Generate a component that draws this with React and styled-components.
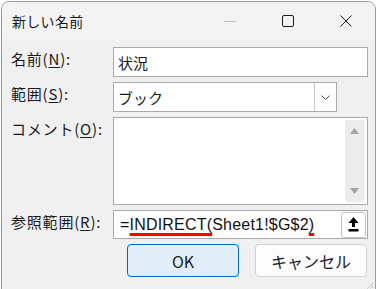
import React from 'react';
import styled, { createGlobalStyle } from 'styled-components';

const GlobalStyle = createGlobalStyle`
  html, body {
    margin: 0;
    padding: 0;
    background: #ffffff;
  }
  body {
    font-family: "Noto Sans CJK JP", "Noto Sans", sans-serif;
    color: #1a1a1a;
  }
`;

const Window = styled.div`
  position: relative;
  margin: 1px 0 0 1px;
  width: 375px;
  height: 300px;
  box-sizing: border-box;
  background: #f0f0f0;
  border: 1px solid #9c9c9c;
  border-radius: 8px 8px 0 0;
  overflow: hidden;
`;

const TitleBar = styled.div`
  display: flex;
  align-items: center;
  height: 38px;
  background: #f3f3f3;
`;

const Title = styled.div`
  flex: 1;
  padding-left: 10px;
  font-size: 14px;
  letter-spacing: 0.3px;
`;

const Controls = styled.div`
  display: flex;
  height: 100%;
`;

const ControlButton = styled.div`
  width: 58px;
  height: 100%;
  display: flex;
  align-items: center;
  justify-content: center;
`;

const Body = styled.div`
  display: grid;
  grid-template-columns: 102px 1fr;
  row-gap: 5px;
  padding: 7px 7px 0 9px;
`;

const Label = styled.div`
  font-size: 15px;
  line-height: 24px;
  letter-spacing: 0.8px;
  white-space: nowrap;
  u {
    text-underline-offset: 2px;
  }
`;

const Field = styled.div`
  box-sizing: border-box;
  height: ${(p) => p.$h || 30}px;
  width: ${(p) => (p.$w ? `${p.$w}px` : 'auto')};
  background: #ffffff;
  border: 1px solid #a9a9a9;
  display: flex;
  align-items: ${(p) => (p.$top ? 'stretch' : 'center')};
  font-size: 15px;
  padding-left: 4px;
`;

const FieldText = styled.span`
  flex: 1;
`;

const DropButton = styled.div`
  box-sizing: border-box;
  width: 22px;
  height: 28px;
  border-left: 1px solid #c9c9c9;
  display: flex;
  align-items: center;
  justify-content: center;
`;

const Scrollbar = styled.div`
  margin: 2px 3px 2px auto;
  width: 19px;
  background: #ececec;
  display: flex;
  flex-direction: column;
  align-items: center;
  justify-content: space-between;
  padding: 8px 0;
  box-sizing: border-box;
`;

const Formula = styled.span`
  flex: 1;
  padding-left: 2px;
  font-family: "Liberation Sans", Arial, sans-serif;
  font-size: 16px;
  letter-spacing: 0.2px;
  color: #111;
`;

const Squiggle = styled.span`
  text-decoration-line: underline;
  text-decoration-color: #ff0000;
  text-decoration-thickness: 3px;
  text-underline-offset: 3px;
  text-decoration-skip-ink: none;
`;

const PickButton = styled.div`
  box-sizing: border-box;
  width: 25px;
  height: 26px;
  margin-right: 1px;
  border: 1px solid #c4c4c4;
  border-radius: 3px;
  background: #ffffff;
  display: flex;
  align-items: center;
  justify-content: center;
`;

const ButtonRow = styled.div`
  grid-column: 1 / -1;
  display: flex;
  justify-content: flex-end;
  gap: 16px;
  padding-right: 1px;
`;

const Button = styled.div`
  box-sizing: border-box;
  width: 112px;
  height: 33px;
  border-radius: 4px;
  display: flex;
  align-items: center;
  justify-content: center;
  font-size: 16px;
  background: ${(p) => (p.$primary ? '#e0eef9' : '#fdfdfd')};
  border: 1px solid ${(p) => (p.$primary ? '#0067c0' : '#d0d0d0')};
`;

const Grip = styled.svg`
  position: absolute;
  right: 1px;
  bottom: 10px;
`;

export default function App() {
  return (
    <>
      <GlobalStyle />
      <Window>
        <TitleBar>
          <Title>新しい名前</Title>
          <Controls>
            <ControlButton>
              <svg width="12" height="12" viewBox="0 0 12 12">
                <line x1="0" y1="6.5" x2="12" y2="6.5" stroke="#bdbdbd" strokeWidth="1" />
              </svg>
            </ControlButton>
            <ControlButton>
              <svg width="12" height="12" viewBox="0 0 12 12">
                <rect x="0.5" y="0.5" width="11" height="11" rx="1.5" fill="none" stroke="#1a1a1a" strokeWidth="1" />
              </svg>
            </ControlButton>
            <ControlButton>
              <svg width="12" height="12" viewBox="0 0 12 12">
                <path d="M0.5 0.5 L11.5 11.5 M11.5 0.5 L0.5 11.5" stroke="#1a1a1a" strokeWidth="1" />
              </svg>
            </ControlButton>
          </Controls>
        </TitleBar>
        <Body>
          <Label>名前(<u>N</u>):</Label>
          <Field>
            <FieldText>状況</FieldText>
          </Field>

          <Label>範囲(<u>S</u>):</Label>
          <Field $w={224}>
            <FieldText>ブック</FieldText>
            <DropButton>
              <svg width="9" height="5" viewBox="0 0 9 5">
                <path d="M0.5 0.5 L4.5 4.5 L8.5 0.5" fill="none" stroke="#444" strokeWidth="1" />
              </svg>
            </DropButton>
          </Field>

          <Label>コメント(<u>O</u>):</Label>
          <Field $h={88} $top>
            <Scrollbar>
              <svg width="9" height="6" viewBox="0 0 9 6">
                <path d="M4.5 0 L9 6 L0 6 Z" fill="#a3a3a3" />
              </svg>
              <svg width="9" height="6" viewBox="0 0 9 6">
                <path d="M0 0 L9 0 L4.5 6 Z" fill="#a3a3a3" />
              </svg>
            </Scrollbar>
          </Field>

          <Label>参照範囲(<u>R</u>):</Label>
          <Field $h={29}>
            <Formula>
              =<Squiggle>INDIRECT(</Squiggle>Sheet1!$G$2<Squiggle>)</Squiggle>
            </Formula>
            <PickButton>
              <svg width="11" height="15" viewBox="0 0 11 15">
                <path d="M5.5 0 L10.5 6 L7 6 L7 10 L4 10 L4 6 L0.5 6 Z" fill="#000" />
                <rect x="0.5" y="12" width="10" height="2.5" fill="#000" />
              </svg>
            </PickButton>
          </Field>

          <ButtonRow>
            <Button $primary>OK</Button>
            <Button>キャンセル</Button>
          </ButtonRow>
        </Body>
        <Grip width="8" height="8" viewBox="0 0 8 8">
          <path d="M7 1 L1 7 M7 4 L4 7" stroke="#9a9a9a" strokeWidth="1" strokeDasharray="1 1" />
        </Grip>
      </Window>
    </>
  );
}
